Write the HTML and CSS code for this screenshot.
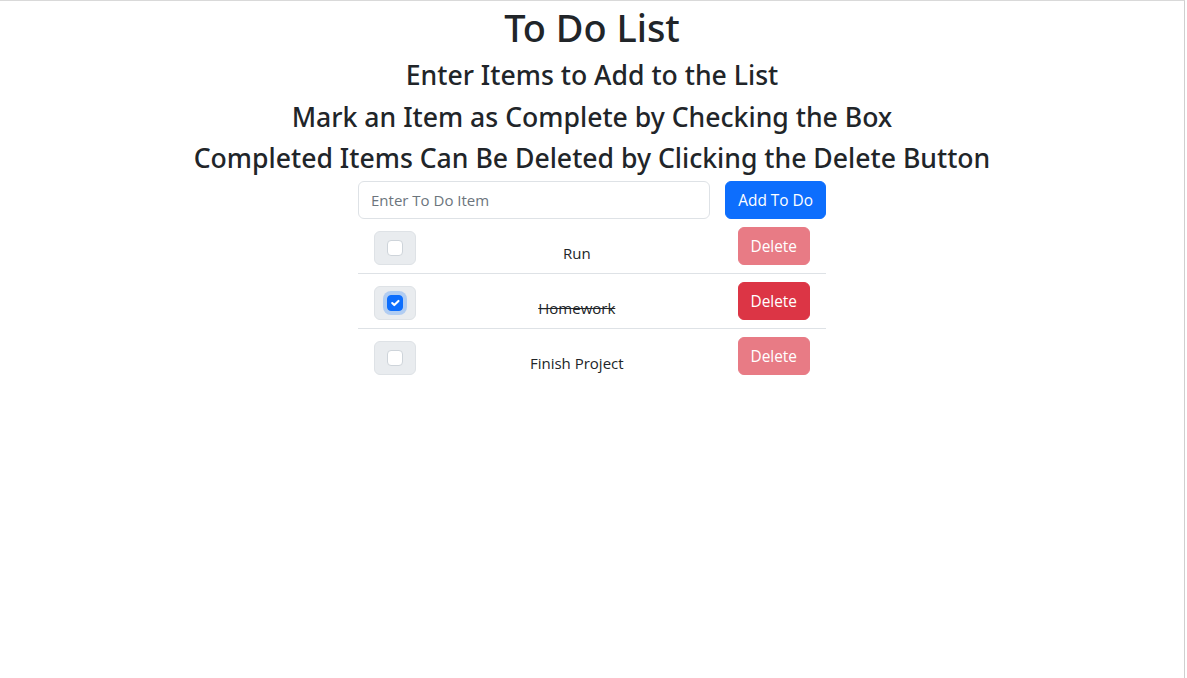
FILE: index.html
```html
<!DOCTYPE html>
<html lang="en">
<head>
<meta charset="utf-8">
<title>To Do List</title>
<link rel="stylesheet" href="styles.css">
</head>
<body>
<div class="frame">
  <header class="intro">
    <h1 class="title">To Do List</h1>
    <h3 class="sub">Enter Items to Add to the List</h3>
    <h3 class="sub">Mark an Item as Complete by Checking the Box</h3>
    <h3 class="sub">Completed Items Can Be Deleted by Clicking the Delete Button</h3>
  </header>
  <main class="todo">
    <form class="add-row">
      <input class="field" type="text" placeholder="Enter To Do Item">
      <button class="btn btn-primary" type="button">Add To Do</button>
    </form>
    <ul class="list">
      <li class="item">
        <span class="check-box"><span class="check"></span></span>
        <span class="label">Run</span>
        <button class="btn btn-danger is-disabled" type="button">Delete</button>
      </li>
      <li class="item">
        <span class="check-box"><span class="check checked"><svg viewBox="0 0 20 20" width="16" height="16"><path d="M6 10l3 3 6-6" fill="none" stroke="#fff" stroke-width="3" stroke-linecap="round" stroke-linejoin="round"/></svg></span></span>
        <span class="label done">Homework</span>
        <button class="btn btn-danger" type="button">Delete</button>
      </li>
      <li class="item">
        <span class="check-box"><span class="check"></span></span>
        <span class="label">Finish Project</span>
        <button class="btn btn-danger is-disabled" type="button">Delete</button>
      </li>
    </ul>
  </main>
</div>
</body>
</html>
```

FILE: styles.css
```css
* { box-sizing: border-box; }
html, body { margin: 0; padding: 0; background: #fff; }
body {
  font-family: "Open Sans", "Noto Sans", sans-serif;
  font-size: 15px;
  line-height: 1.6;
  color: #212529;
}
.frame {
  width: 1185px;
  height: 678px;
  border-top: 1px solid #d9d9d9;
  border-right: 1px solid #cfcfcf;
  text-align: center;
}
.intro {
  display: flex;
  flex-direction: column;
  align-items: center;
  padding-top: 3px;
  font-family: "Noto Sans", "Open Sans", sans-serif;
}
.title {
  margin: 0 0 8px;
  font-size: 37.9px;
  font-weight: 500;
  line-height: 47px;
}
.sub {
  margin: 0 0 8px;
  font-size: 26.6px;
  font-weight: 500;
  line-height: 33.5px;
}
.sub:last-child { margin-bottom: 5.5px; }
.todo { width: 468px; margin: 0 auto; }
.add-row { display: flex; gap: 15px; margin: 0; }
.field {
  flex: 1;
  height: 38px;
  padding: 6px 12px;
  font: inherit;
  color: #212529;
  border: 1px solid #dee2e6;
  border-radius: 6px;
  background: #fff;
}
.field::placeholder { color: #6c757d; }
.btn {
  height: 38px;
  padding: 7px 12px 5px;
  font: inherit;
  font-size: 15.4px;
  line-height: 24px;
  border: 1px solid transparent;
  border-radius: 6px;
  color: #fff;
  cursor: pointer;
}
.btn-primary { background: #0d6efd; border-color: #0d6efd; }
.btn-danger { background: #dc3545; border-color: #dc3545; }
.btn-danger.is-disabled { opacity: .65; }
.list { list-style: none; margin: 0; padding: 0; }
.item {
  display: flex;
  align-items: flex-end;
  padding: 8px 16px;
  border-bottom: 1px solid #dee2e6;
}
.item:last-child { border-bottom: 0; }
.check-box {
  width: 42px;
  height: 34px;
  display: flex;
  align-items: center;
  justify-content: center;
  background: #e9ecef;
  border: 1px solid #dee2e6;
  border-radius: 6px;
}
.check {
  width: 16px;
  height: 16px;
  border: 1px solid #ced4da;
  border-radius: 4px;
  background: #fff;
  display: flex;
}
.check.checked {
  background: #0d6efd;
  border-color: #0d6efd;
  box-shadow: 0 0 0 4px rgba(13,110,253,.25);
}
.check svg { width: 14px; height: 14px; }
.label { flex: 1; text-align: center; }
.done { text-decoration: line-through; }
```
